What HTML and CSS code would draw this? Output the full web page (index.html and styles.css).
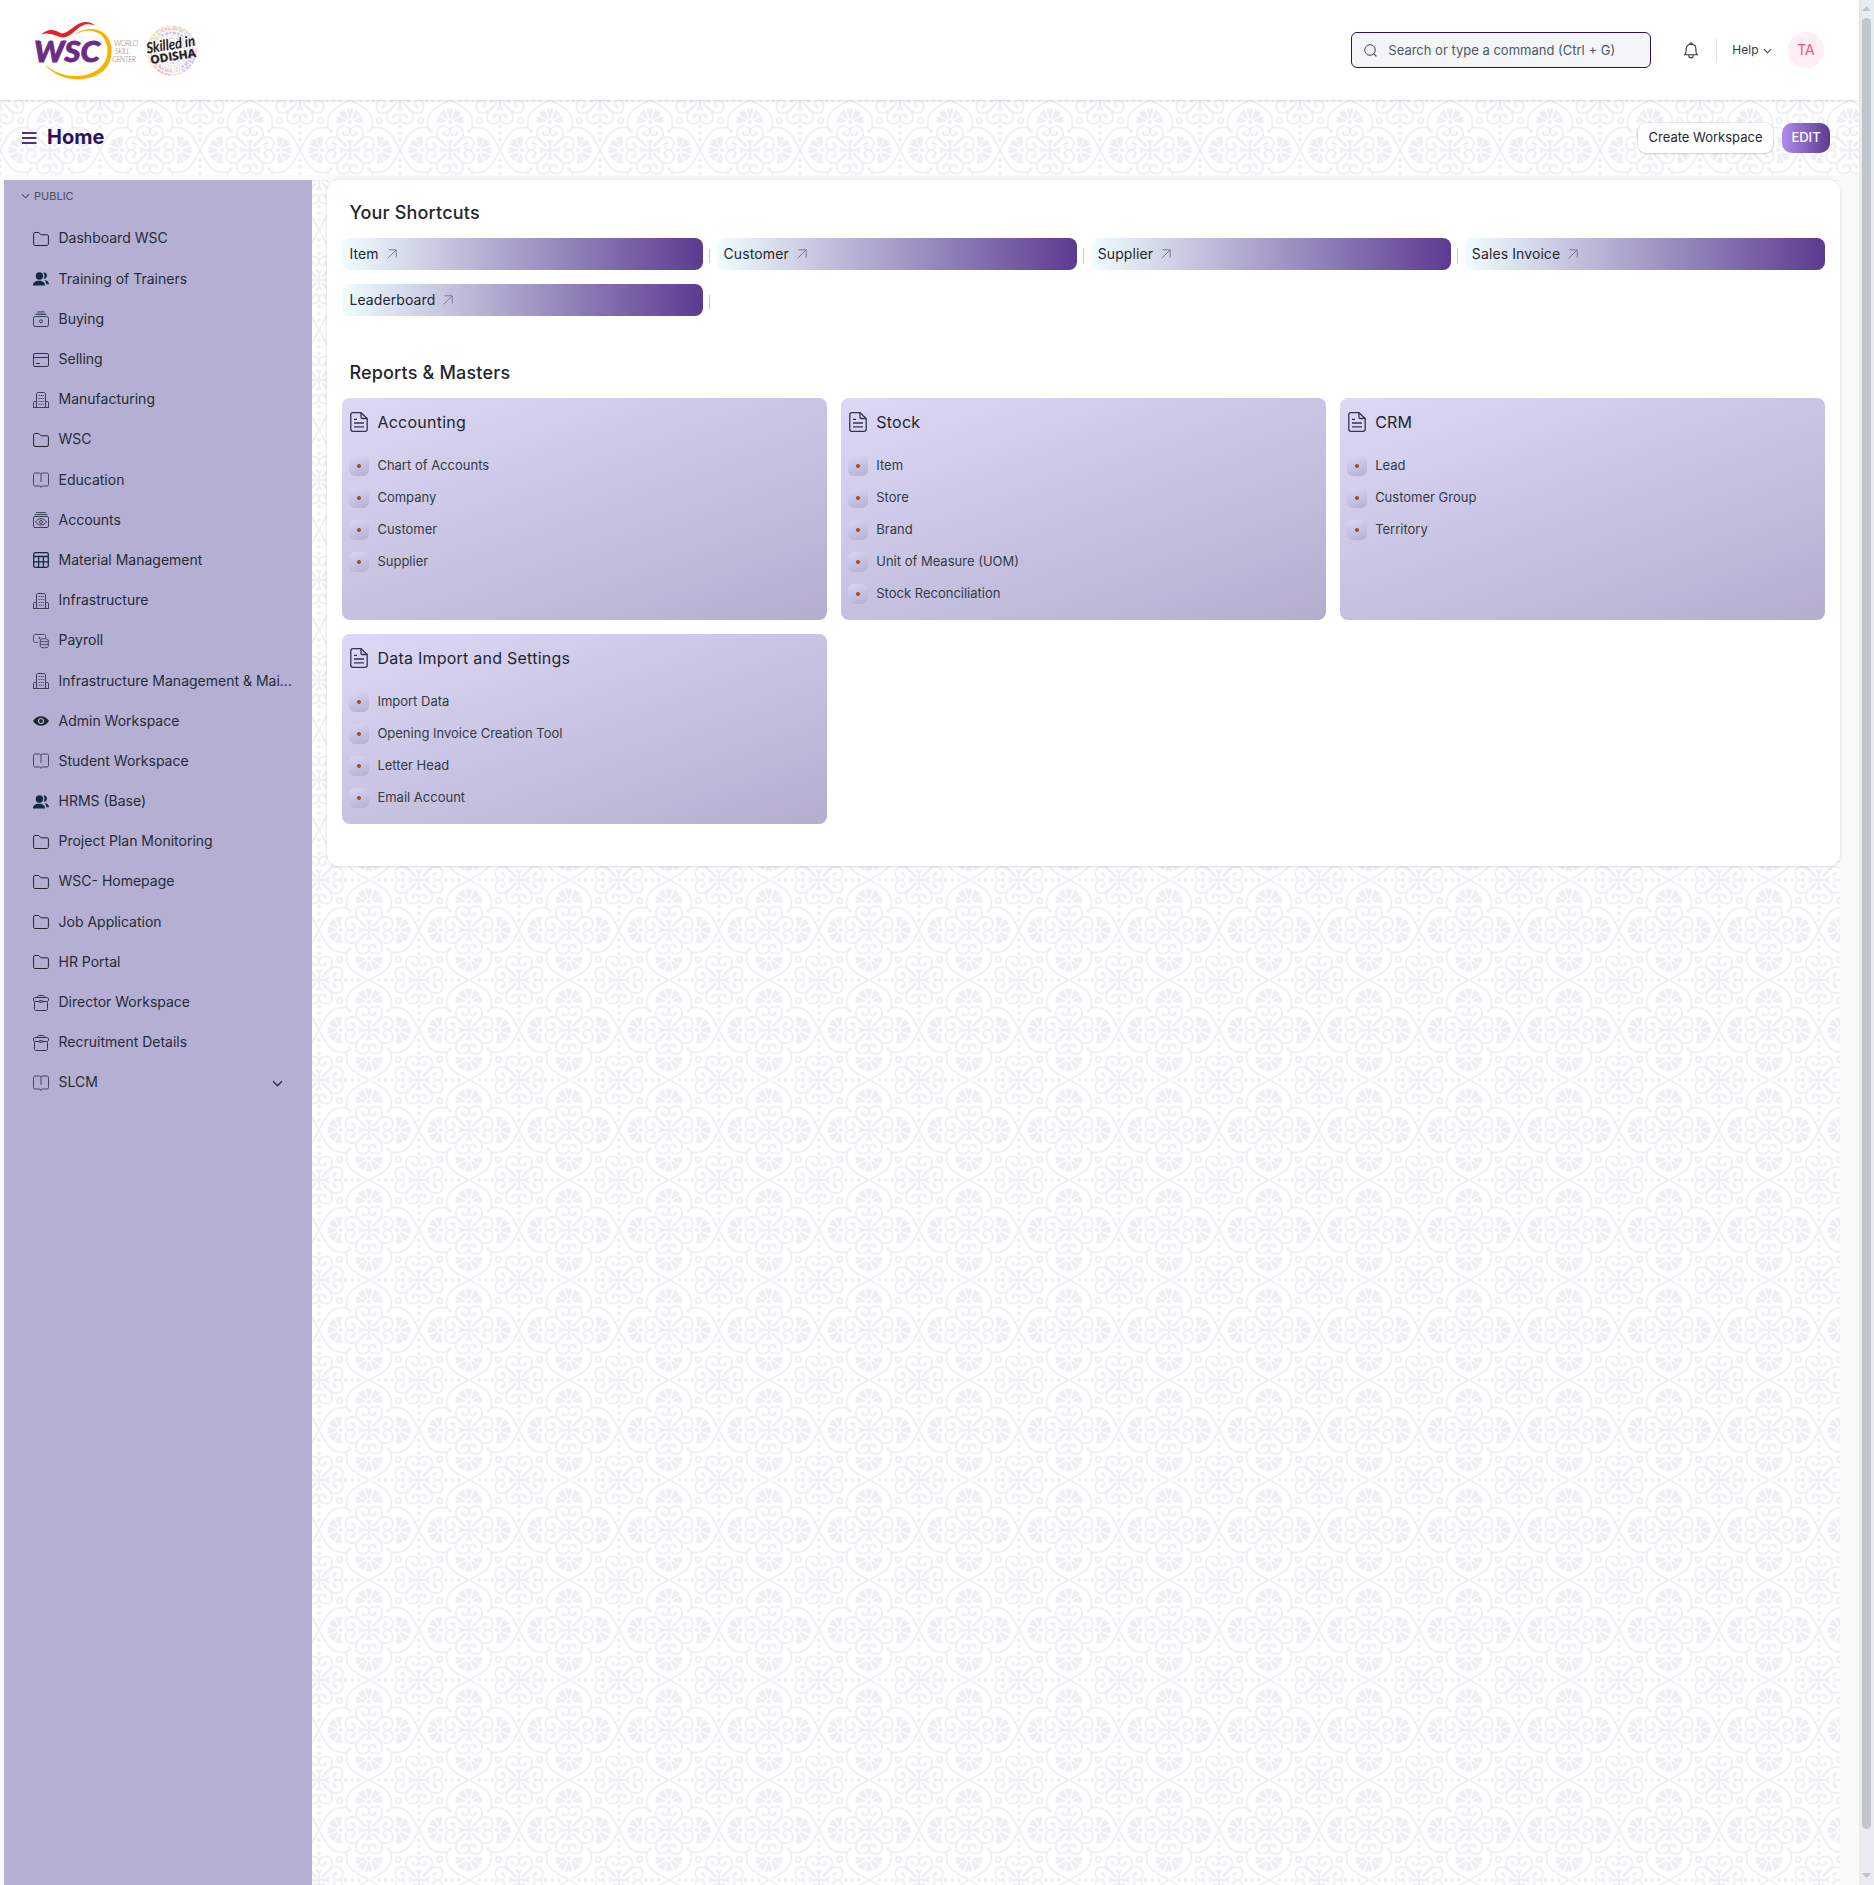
FILE: index.html
```html
<!DOCTYPE html>
<html lang="en">
<head>
<meta charset="utf-8">
<title>Home</title>
<link rel="stylesheet" href="styles.css">
</head>
<body>
<svg class="sprite" width="0" height="0" aria-hidden="true">
  <symbol id="i-folder" viewBox="0 0 16 16"><path d="M.6 13V2.6C.6 2 1 1.500 1.700 1.500h3.700c.4 0 .7.200 1 .5l1 1.400c.2.200.5.400.8.400h6.200c.6 0 1 .5 1 1.100V13c0 .8-.6 1.500-1.400 1.500H2C1.200 14.500.6 13.800.6 13z" fill="none" stroke="#1f272e"/></symbol>
  <symbol id="i-users" viewBox="0 0 16 16"><g fill="#112b42"><circle cx="6.400" cy="5" r="3.700"/><path d="M0 14.200c0-2.800 2.400-4.500 6-4.500s6 1.700 6 4.500c0 .2-.1.300-.3.300H.3c-.2 0-.3-.1-.3-.3zM10.300 1.600c2-.6 3.700.9 3.700 3 0 1.900-1.300 3.400-3.300 3.300 1.100-1.900 1.100-4.400-.4-6.300zM11.500 9.200c2.700 0 4.500 1.600 4.500 4.100h-2.600c-.2-1.700-.8-3-1.900-4.100z"/></g></symbol>
  <symbol id="i-buying" viewBox="0 0 16 16"><g fill="none" stroke="#3c4256"><rect x=".5" y="5.500" width="15" height="10" rx="1.800"/><path d="M2.500 3.500h11M4.500 .8h7" stroke-width=".9"/><path d="M3.500 2.200h9" stroke-width=".7"/><circle cx="8" cy="10.300" r="1.500"/></g></symbol>
  <symbol id="i-selling" viewBox="0 0 16 16"><g fill="none" stroke="#30364a"><rect x=".5" y="1.500" width="15" height="13" rx="1.500"/><path d="M.5 5.500h15M3 11.500h4"/></g></symbol>
  <symbol id="i-building" viewBox="0 0 16 16"><g fill="none" stroke="#3c4256"><path d="M3.500 15V2c0-.8.5-1.500 1.300-1.500h6.400c.8 0 1.300.7 1.300 1.500v13M.5 15.500V10.500c0-.6.500-1 1-1h2M15.500 15.500V10.500c0-.6-.5-1-1-1h-2M0 15.500h16"/><path d="M5.500 3.500h5.500M5.500 6.500h5.500M5.500 9.500h5.500M5.500 12.300h5.500" stroke-dasharray="1.200 .9"/></g></symbol>
  <symbol id="i-book" viewBox="0 0 16 16"><path d="M8 15c-.2-.7-.8-1-1.500-1H2c-.8 0-1.500-.6-1.500-1.400V2.500c0-.8.700-1.500 1.500-1.500h4.500C7.400 1 8 1.600 8 2.600v7.400M8 2.600c0-1 .6-1.600 1.500-1.600H14c.8 0 1.500.7 1.500 1.500v10.100c0 .8-.7 1.400-1.500 1.400H9.500c-.7 0-1.300.3-1.500 1v.8" fill="none" stroke="#454b62"/></symbol>
  <symbol id="i-accounts" viewBox="0 0 16 16"><g fill="none" stroke="#3c4256"><rect x=".5" y="4.500" width="15" height="11" rx="1.500"/><path d="M1.500 2.600h13M3 .6h10M2.500 10c3-4.500 8-4.500 11 0-3 4-8 4-11 0z"/><circle cx="8" cy="10" r="1.500"/></g></symbol>
  <symbol id="i-table" viewBox="0 0 16 16"><g fill="none" stroke="#112b42" stroke-width="1.300"><rect x=".7" y=".7" width="14.600" height="14.600" rx="1.500"/><path d="M.7 4.500h14.600M.7 9.800h14.600M5.600 4.500v11M10.400 4.500v11"/></g></symbol>
  <symbol id="i-payroll" viewBox="0 0 17 16"><g fill="none" stroke="#3c4256"><path d="M5 9.500H2.400C1.300 9.500.5 8.700.5 7.700V2.800C.5 1.700 1.300 1 2.400 1h9C12.500 1 13.400 1.700 13.400 2.800v1.700"/><ellipse cx="12" cy="7.200" rx="4.300" ry="1.700"/><path d="M7.700 7.200v6.300c0 2.300 8.600 2.300 8.600 0V7.200M7.700 10.300c0 2.200 8.600 2.200 8.600 0"/></g><circle cx="7" cy="4.800" r="1" fill="#3c4256"/></symbol>
  <symbol id="i-eye" viewBox="0 0 16 16"><path d="M0 8c3.600-6.300 12.400-6.300 16 0-3.600 6.300-12.400 6.300-16 0z" fill="#1f272e"/><circle cx="8" cy="8" r="2.500" fill="none" stroke="#b5afd3" stroke-width="1.200"/></symbol>
  <symbol id="i-case" viewBox="0 0 16 16"><g fill="none" stroke="#30364a"><path d="M4.500 2.500C4.500 1.300 5 .5 6.200.5h3.600c1.200 0 1.700.8 1.700 2M1.500 7.300v6.400c0 1 .6 1.800 1.500 1.800h10c1 0 1.500-.8 1.500-1.800V7.300M6 6.500h-4c-.8 0-1.500-.6-1.500-1.500V4c0-.8.700-1.500 1.500-1.500h12c.8 0 1.500.7 1.500 1.500v1c0 .9-.7 1.500-1.500 1.500h-4"/><rect x="6" y="5.700" width="4" height="1.600" rx=".5"/></g></symbol>
  <symbol id="i-doc" viewBox="0 0 18 20"><g fill="none" stroke="#30364a" stroke-width="1.300"><path d="M11 .7H3C1.700.7.800 1.500.8 2.800v14.400c0 1.300.9 2.100 2.200 2.100h12c1.300 0 2.200-.8 2.200-2.100V6.500z"/><path d="M11 .7v4.600c0 .8.500 1.200 1.200 1.200h5M4 7.400h3M4 11h10M4 14.800h10"/></g></symbol>
  <symbol id="i-arrow" viewBox="0 0 10 10"><path d="M.7 9.300L9 1M1.500.8h7.700v7.700" fill="none" stroke="#74747c" stroke-width=".9"/></symbol>
  <symbol id="i-chev" viewBox="0 0 10 6"><path d="M1 1l4 4 4-4" fill="none" stroke="currentColor" stroke-width="1.200"/></symbol>
</svg>

<div class="app">
<div class="page">
  <header class="navbar">
    <div class="brand">
      <svg class="logo" width="105" height="60" viewBox="0 0 105 60" role="img" aria-label="WSC World Skill Center">
        <path d="M39.500 13C50 3 76.500 4 76.500 29c0 21-18 28.300-34.500 28.300C28 57.300 15 50 9.500 42 18 50 30 54.500 42 54 58 53.500 72.300 45 72.500 29 72.700 9 53 4 39.500 13z" fill="#fbb100"/>
        <path d="M5.500 13C13 5.500 20 7.500 26.500 11.500c8 0 14-11.500 24-11.500 4.500 0 7 1.500 9.500 3.500-8-2.500-13-1-19 4.500-4 3.500-8 7.500-13.500 7.500C20.500 14.500 14 9 5.500 13z" fill="#ea1c24"/>
        <text class="wsc" x="-1" y="39.600" textLength="66" lengthAdjust="spacingAndGlyphs">WSC</text>
        <text class="wsc-sub" x="79" y="24.200" textLength="24">WORLD</text>
        <text class="wsc-sub" x="80" y="32" textLength="15">SKILL</text>
        <text class="wsc-sub" x="77" y="39.800" textLength="24">CENTER</text>
      </svg>
      <svg width="60" height="54" viewBox="-3 0 60 54" role="img" aria-label="Skilled in Odisha">
        <g fill="none" stroke-width="1.900" opacity=".55">
          <g stroke-dasharray="2.600 1 1 1.100"><circle cx="26" cy="27.500" r="24.200" stroke="#f4b59b"/><circle cx="26" cy="27.500" r="21.300" stroke="#e6a8cf" stroke-dashoffset="1.500"/><circle cx="26" cy="27.500" r="18.400" stroke="#a9c6ea"/><circle cx="26" cy="27.500" r="15.500" stroke="#f2cf8a" stroke-dashoffset="2"/><circle cx="26" cy="27.500" r="12.500" stroke="#c6b5e6"/><circle cx="26" cy="27.500" r="9" stroke="#f0b6c6"/></g>
          <g stroke-dasharray="2 1.800 3 1"><path d="M2 27a24 24 0 0 1 12-20" stroke="#c9d95b" stroke-width="2.500"/><path d="M6 30a21 21 0 0 1 10-20" stroke="#d9dd6a"/><path d="M9 44a24 24 0 0 0 17 8" stroke="#f0876b"/><path d="M10 40a20 20 0 0 0 15 8" stroke="#ef7f86"/><path d="M37 48a24 24 0 0 0 12-17" stroke="#7fa9e8"/><path d="M36 44a20 20 0 0 0 10-14" stroke="#a48fe0"/><path d="M29 4a24 24 0 0 1 18 14" stroke="#8fd4c8"/><path d="M15 8a22 22 0 0 1 22 1" stroke="#f5955f"/><path d="M16 13a18 18 0 0 1 20 0" stroke="#a884d8"/></g>
        </g>
        <g transform="rotate(-9 26 27)">
          <text class="skilled" x="1" y="26.500" textLength="49" lengthAdjust="spacingAndGlyphs">Skilled in</text>
          <text class="odisha" x="3" y="37.500" textLength="46" lengthAdjust="spacingAndGlyphs">ODISHA</text>
        </g>
      </svg>
    </div>
    <div class="nav-right">
      <div class="search">
        <svg width="13" height="13" viewBox="0 0 13 13"><circle cx="6" cy="6" r="5.300" fill="none" stroke="#404a52"/><path d="M9.800 9.800l2.600 2.600" stroke="#404a52" stroke-width="1.200"/></svg>
        <span>Search or type a command (Ctrl + G)</span>
      </div>
      <svg class="bell" width="14" height="17" viewBox="0 0 14 17"><path d="M.7 12.800c1.700-1.300 1.400-3.300 1.400-5.600C2.100 4 4 2.300 7 2.300s4.900 1.700 4.900 4.900c0 2.300-.3 4.300 1.400 5.600zM4.800 13.200c0 3.500 4.400 3.500 4.400 0M5.800 2.200c0-1.900 2.400-1.900 2.400 0" fill="none" stroke="#333c44" stroke-width="1.100"/></svg>
      <span class="divider"></span>
      <span class="help">Help <svg width="9" height="6"><use href="#i-chev"/></svg></span>
      <span class="avatar">TA</span>
    </div>
  </header>

  <div class="page-head">
    <svg width="15" height="12" viewBox="0 0 15 12"><path d="M0 1h14.500M0 6h14.500M0 11h14.500" stroke="#4d3680" stroke-width="1.800"/></svg>
    <h1>Home</h1>
    <button class="btn-create">Create Workspace</button>
    <button class="btn-edit">EDIT</button>
  </div>

  <div class="body">
    <nav class="sidebar">
      <div class="side-label"><svg width="9" height="6"><use href="#i-chev"/></svg>PUBLIC</div>
      <ul>
        <li><svg><use href="#i-folder"/></svg><span>Dashboard WSC</span></li>
        <li><svg><use href="#i-users"/></svg><span>Training of Trainers</span></li>
        <li><svg><use href="#i-buying"/></svg><span>Buying</span></li>
        <li><svg><use href="#i-selling"/></svg><span>Selling</span></li>
        <li><svg><use href="#i-building"/></svg><span>Manufacturing</span></li>
        <li><svg><use href="#i-folder"/></svg><span>WSC</span></li>
        <li><svg><use href="#i-book"/></svg><span>Education</span></li>
        <li><svg><use href="#i-accounts"/></svg><span>Accounts</span></li>
        <li><svg><use href="#i-table"/></svg><span>Material Management</span></li>
        <li><svg><use href="#i-building"/></svg><span>Infrastructure</span></li>
        <li><svg><use href="#i-payroll"/></svg><span>Payroll</span></li>
        <li><svg><use href="#i-building"/></svg><span>Infrastructure Management &amp; Mai...</span></li>
        <li><svg><use href="#i-eye"/></svg><span>Admin Workspace</span></li>
        <li><svg><use href="#i-book"/></svg><span>Student Workspace</span></li>
        <li><svg><use href="#i-users"/></svg><span>HRMS (Base)</span></li>
        <li><svg><use href="#i-folder"/></svg><span>Project Plan Monitoring</span></li>
        <li><svg><use href="#i-folder"/></svg><span>WSC- Homepage</span></li>
        <li><svg><use href="#i-folder"/></svg><span>Job Application</span></li>
        <li><svg><use href="#i-folder"/></svg><span>HR Portal</span></li>
        <li><svg><use href="#i-case"/></svg><span>Director Workspace</span></li>
        <li><svg><use href="#i-case"/></svg><span>Recruitment Details</span></li>
        <li><svg><use href="#i-book"/></svg><span>SLCM</span><svg class="drop"><use href="#i-chev"/></svg></li>
      </ul>
    </nav>

    <main class="content">
      <section class="panel">
        <h2>Your Shortcuts</h2>
        <div class="shortcuts">
          <a class="shortcut">Item<svg><use href="#i-arrow"/></svg></a>
          <a class="shortcut">Customer<svg><use href="#i-arrow"/></svg></a>
          <a class="shortcut">Supplier<svg><use href="#i-arrow"/></svg></a>
          <a class="shortcut">Sales Invoice<svg><use href="#i-arrow"/></svg></a>
          <a class="shortcut">Leaderboard<svg><use href="#i-arrow"/></svg></a>
        </div>
        <h2 class="reports">Reports &amp; Masters</h2>
        <div class="cards">
          <article class="card"><h3><svg><use href="#i-doc"/></svg>Accounting</h3>
            <ul><li>Chart of Accounts</li><li>Company</li><li>Customer</li><li>Supplier</li></ul></article>
          <article class="card"><h3><svg><use href="#i-doc"/></svg>Stock</h3>
            <ul><li>Item</li><li>Store</li><li>Brand</li><li>Unit of Measure (UOM)</li><li>Stock Reconciliation</li></ul></article>
          <article class="card"><h3><svg><use href="#i-doc"/></svg>CRM</h3>
            <ul><li>Lead</li><li>Customer Group</li><li>Territory</li></ul></article>
          <article class="card"><h3><svg><use href="#i-doc"/></svg>Data Import and Settings</h3>
            <ul><li>Import Data</li><li>Opening Invoice Creation Tool</li><li>Letter Head</li><li>Email Account</li></ul></article>
        </div>
      </section>
    </main>
  </div>
</div>
<div class="scrollbar">
  <svg width="9" height="5" viewBox="0 0 9 5"><path d="M4.500 0L9 5H0z" fill="#c0c6cf"/></svg>
  <span class="thumb"></span>
  <svg width="9" height="5" viewBox="0 0 9 5"><path d="M4.500 5L9 0H0z" fill="#c0c6cf"/></svg>
</div>
</div>
</body>
</html>
```

FILE: styles.css
```css
:root {
  --tile: url("data:image/svg+xml,%3Csvg xmlns='http://www.w3.org/2000/svg' xmlns:xlink='http://www.w3.org/1999/xlink' width='100' height='100' viewBox='0 0 100 100'%3E%3Cdefs%3E%3Cg id='h'%3E%3Cpath d='M-3.500-4L-11-11.500C-14.500-15-14-23.700-7-23.700C-3-23.700 0-22 0-18.800C0-16-2-14.300-4.200-14.300C-6.500-14.300-7.600-16.500-6.600-18' fill='none'/%3E%3Ccircle cx='-5' cy='-16.500' r='1' stroke='none'/%3E%3C/g%3E%3Cg id='q'%3E%3Cuse xlink:href='%23h'/%3E%3Cuse xlink:href='%23h' transform='scale(-1 1)'/%3E%3Cpath d='M-1.300 0L-1.300-6L-3.500-10L-1.800-10.800L0-9L1.800-10.800L3.500-10L1.300-6L1.300 0Z' stroke='none'/%3E%3C/g%3E%3Cg id='m'%3E%3Cuse xlink:href='%23q'/%3E%3Cuse xlink:href='%23q' transform='rotate(90)'/%3E%3Cuse xlink:href='%23q' transform='rotate(180)'/%3E%3Cuse xlink:href='%23q' transform='rotate(270)'/%3E%3C/g%3E%3Cpath id='p' stroke='none' d='M-.7-4L-3.300-11Q-3.500-13.700-1.700-13.700Q-.3-13.700 0-12.500Q.3-13.700 1.700-13.700Q3.500-13.700 3.300-11L.7-4Z'/%3E%3Cg id='f'%3E%3Cg transform='translate(0 -28)'%3E%3Ccircle r='2' stroke='none'/%3E%3Cuse xlink:href='%23p'/%3E%3Cuse xlink:href='%23p' transform='rotate(40)'/%3E%3Cuse xlink:href='%23p' transform='rotate(-40)'/%3E%3Cuse xlink:href='%23p' transform='rotate(78)'/%3E%3Cuse xlink:href='%23p' transform='rotate(-78)'/%3E%3C/g%3E%3Cpath d='M0-50C-14-43-22.300-38-22.300-28V-22.500L-19.500-19.500M0-50C14-43 22.300-38 22.300-28V-22.500L19.500-19.500' fill='none'/%3E%3Ccircle cx='-19' cy='-19' r='1.800' stroke='none'/%3E%3Cg stroke='none'%3E%3Ccircle cx='50' cy='-23.300' r='1.900'/%3E%3Ccircle cx='50' cy='-16.800' r='1.900'/%3E%3Ccircle cx='50' cy='-10.200' r='1.900'/%3E%3Ccircle cx='50' cy='23.300' r='1.900'/%3E%3Ccircle cx='50' cy='16.800' r='1.900'/%3E%3Ccircle cx='50' cy='10.200' r='1.900'/%3E%3C/g%3E%3Ccircle cx='29.300' cy='-29.300' r='2.700' fill='none'/%3E%3C/g%3E%3C/defs%3E%3Cg fill='%23eeeff3' stroke='%23eeeff3' stroke-width='1.800' stroke-linecap='round'%3E%3Cg transform='translate(50 50)'%3E%3Cuse xlink:href='%23m'/%3E%3Cuse xlink:href='%23f'/%3E%3Cuse xlink:href='%23f' transform='rotate(90)'/%3E%3Cuse xlink:href='%23f' transform='rotate(180)'/%3E%3Cuse xlink:href='%23f' transform='rotate(270)'/%3E%3C/g%3E%3Cuse xlink:href='%23m'/%3E%3Cuse xlink:href='%23m' x='100'/%3E%3Cuse xlink:href='%23m' y='100'/%3E%3Cuse xlink:href='%23m' x='100' y='100'/%3E%3C/g%3E%3C/svg%3E");
}
* { box-sizing: border-box; }
body {
  margin: 0;
  background: #f9fafa;
  color: #1f272e;
  font-family: Inter, "Liberation Sans", sans-serif;
  font-size: 14px;
}
ul { list-style: none; margin: 0; padding: 0; }
h1, h2, h3 { margin: 0; }
.sprite { position: absolute; }
.app { display: flex; height: 1885px; overflow: hidden; }
.page { flex: 1; display: flex; flex-direction: column; }

/* Top bar */
.navbar {
  height: 100px;
  flex: none;
  display: flex;
  justify-content: space-between;
  align-items: center;
  padding: 0 35px;
  background: #fff;
  box-shadow: 0 1px 3px rgba(0, 0, 0, .12);
  z-index: 1;
}
.brand { display: flex; align-items: center; gap: 3px; }
.brand svg { overflow: visible; }
.logo { margin-top: 4px; }
.wsc { font: italic 900 29px Lato, sans-serif; fill: #6c2b86; stroke: #6c2b86; stroke-width: .8px; }
.wsc-sub { font: italic 300 7.500px Lato, sans-serif; fill: #777; }
.skilled { font: italic bold 15px Lato, sans-serif; fill: #222; }
.odisha { font: bold 11.500px "Open Sans", sans-serif; fill: #222; stroke: #222; stroke-width: .3px; }
.nav-right { display: flex; align-items: center; }
.search {
  width: 300px;
  height: 36px;
  display: flex;
  align-items: center;
  gap: 11px;
  padding-left: 12px;
  border: 1px solid #2d1160;
  border-radius: 6px;
  background: #f4f5f6;
  color: #4c5a67;
  font-size: 13px;
}
.bell { margin-left: 33px; }
.divider { width: 1px; height: 24px; margin-left: 18px; background: #dcdfe3; }
.help { display: flex; align-items: center; gap: 4.500px; margin: -1px 0 0 15px; font-size: 12px; color: #333c44; }
.help svg { margin-top: 2px; }
.avatar {
  width: 36px;
  height: 36px;
  margin-left: 16px;
  border-radius: 50%;
  background: #ffeef3;
  color: #f0508a;
  font-size: 14px;
  line-height: 36px;
  text-align: center;
}

/* Title row */
.page-head {
  height: 75px;
  flex: none;
  display: flex;
  align-items: center;
  padding: 0 29px 0 22px;
  background: #fff var(--tile) 0 0;
}
h1 { margin: -2px auto 0 10px; font-size: 20px; font-weight: 700; color: #2d1160; }
button { height: 30px; border: 0; padding: 0 0 2px; font: 400 13px Inter, sans-serif; }
.btn-create {
  width: 135px;
  border-radius: 8px;
  background: #fff;
  color: #1f272e;
  box-shadow: 0 0 0 .5px rgba(0, 0, 0, .14), 0 1px 2px rgba(0, 0, 0, .12);
}
.btn-edit {
  width: 48px;
  margin-left: 9px;
  border-radius: 10px;
  background: linear-gradient(90deg, #b08cf0, #5b3a8e);
  color: #fff;
  font-weight: 500;
}

/* Workspace body */
.body { flex: 1; display: flex; margin: 5px 19px 0 4px; }
.sidebar { width: 308px; flex: none; background: #b5afd3; }
.side-label {
  display: flex;
  align-items: center;
  gap: 4px;
  height: 32px;
  margin-bottom: 5.850px;
  padding-left: 17px;
  color: #4c5060;
  font-size: 11px;
}
.sidebar li {
  display: flex;
  align-items: center;
  gap: 9.500px;
  height: 40.1875px;
  padding: 0 29px;
  color: #262c38;
  white-space: nowrap;
}
.sidebar li svg { width: 16px; height: 16px; flex: none; margin-top: 2px; }
.sidebar li .drop { width: 11px; height: 7px; margin-left: auto; margin-top: 3px; }
.content { flex: 1; padding-left: 15px; background: #fff var(--tile) 7px 0; }
.panel {
  height: 686px;
  padding: 20px 15px 20px 15.400px;
  border-radius: 12px;
  background: #fff;
  box-shadow: 0 0 5px rgba(25, 39, 52, .1), 0 1px 2px rgba(25, 39, 52, .08);
}
h2 { padding-left: 7px; height: 38px; font-size: 18px; line-height: 26px; font-weight: 500; letter-spacing: .18px; }
.shortcuts { display: grid; grid-template-columns: repeat(4, 1fr); gap: 14px; }
.shortcut {
  position: relative;
  display: flex;
  align-items: center;
  height: 32px;
  padding: 0 0 1px 7px;
  border-radius: 8px;
  background: linear-gradient(90deg, #f0fdff, #5b3a90);
  letter-spacing: .1px;
}
.shortcut svg { width: 10px; height: 10px; margin-left: 8px; }
.shortcut:not(:nth-child(4))::after {
  content: "";
  position: absolute;
  left: calc(100% + 6px);
  top: 11px;
  width: 1px;
  height: 14px;
  background: #c0c6cc;
}
.reports { margin-top: 44px; height: 38px; }
.cards { display: grid; grid-template-columns: repeat(3, 1fr); gap: 14px; }
.card {
  padding: 7px 7px 11px;
  border-radius: 8px;
  background: linear-gradient(160deg, #dcd8f5, #b4add0);
}
h3 { display: flex; align-items: center; gap: 10px; height: 33px; padding-left: 1px; font-size: 16px; font-weight: 400; letter-spacing: .24px; }
h3 svg { width: 18px; height: 20px; margin-right: -1px; }
.card ul { padding-top: 11px; }
.card li { display: flex; align-items: center; gap: 8px; height: 32px; font-size: 13px; color: #333c44; }
.card li::before {
  content: "";
  width: 20px;
  height: 20px;
  margin-top: 2px;
  border-radius: 6px;
  background: radial-gradient(circle, #9c5a14 1.700px, transparent 2.300px), linear-gradient(160deg, #dad6f2, #b5afd3);
}

/* Window scrollbar */
.scrollbar {
  width: 15px;
  display: flex;
  flex-direction: column;
  align-items: center;
  padding: 6px 0 7px;
  background: #e9ecf0;
}
.thumb { flex: none; width: 9px; height: 1811px; margin: 7px 0 auto; border-radius: 5px; background: #c0c5ce; }
```
